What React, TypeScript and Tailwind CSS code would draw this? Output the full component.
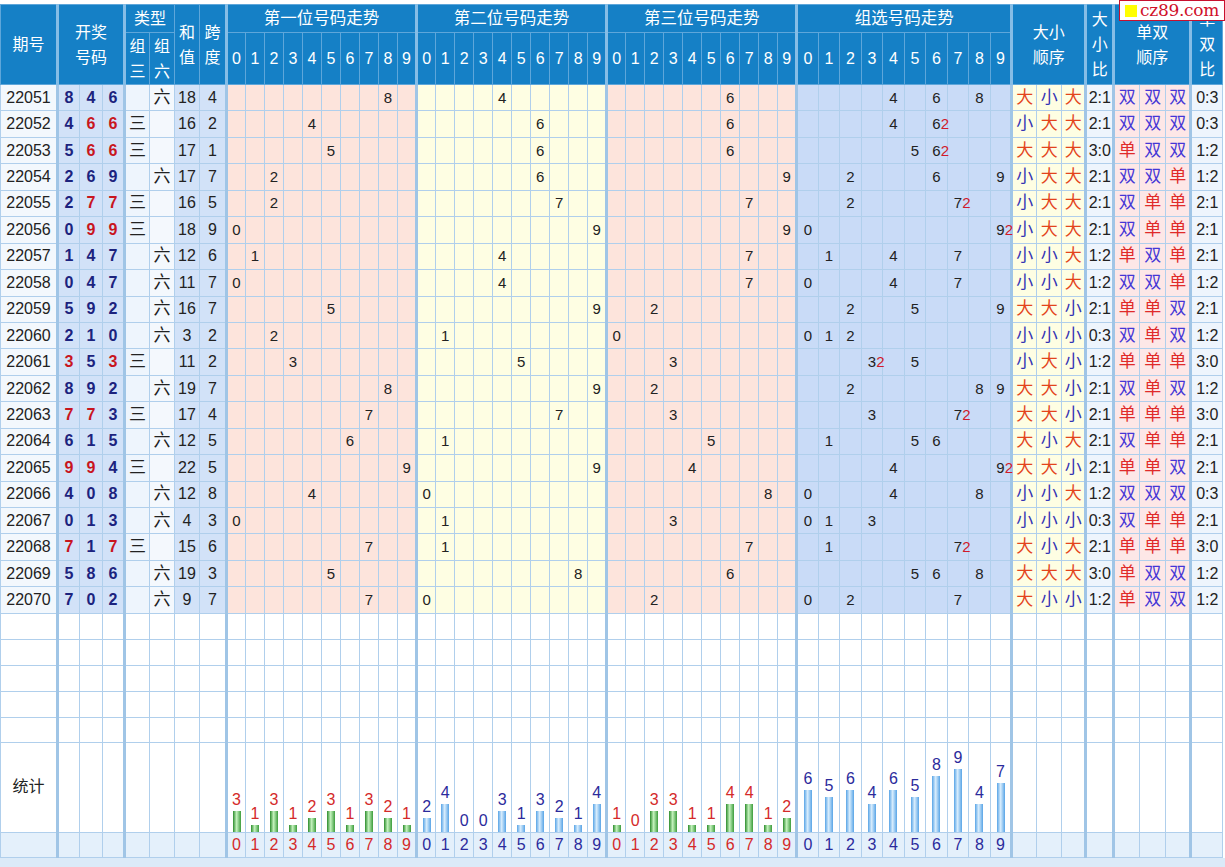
import React from 'react'

const DRAWS: [string, string][] = [
  ['22051', '846'], ['22052', '466'], ['22053', '566'], ['22054', '269'], ['22055', '277'],
  ['22056', '099'], ['22057', '147'], ['22058', '047'], ['22059', '592'], ['22060', '210'],
  ['22061', '353'], ['22062', '892'], ['22063', '773'], ['22064', '615'], ['22065', '994'],
  ['22066', '408'], ['22067', '013'], ['22068', '717'], ['22069', '586'], ['22070', '702'],
]

const rows = DRAWS.map(([period, s]) => {
  const d = s.split('').map(Number)
  const cnt = Array.from({ length: 10 }, (_, n) => d.filter((x) => x === n).length)
  const big = d.filter((x) => x >= 5).length
  const odd = d.filter((x) => x % 2 === 1).length
  return {
    period,
    d,
    cnt,
    zu3: new Set(d).size === 2,
    sum: d[0] + d[1] + d[2],
    span: Math.max(...d) - Math.min(...d),
    big,
    odd,
  }
})

const posStats = [0, 1, 2].map((p) => Array.from({ length: 10 }, (_, n) => rows.filter((r) => r.d[p] === n).length))
// total occurrences of each digit across all draws
const groupStats = Array.from({ length: 10 }, (_, n) => rows.reduce((acc, r) => acc + r.cnt[n], 0))

const DIGITS = [0, 1, 2, 3, 4, 5, 6, 7, 8, 9]
const POS_TITLES = ['第一位号码走势', '第二位号码走势', '第三位号码走势']
const POS_BG = ['bg-[#fde4dc]', 'bg-[#fefee3]', 'bg-[#fde4dc]']

// cell borders
const ln = 'border border-[#b0cfec] p-0 text-center'
const thick = 'border-r-[3px] border-r-[#a0c5e6]'
const hd = 'border border-[#5ea6da] p-0 text-center font-normal text-white'
const hdThick = 'border-r-[3px] border-r-[#86bde6]'

function Bar({ n, green }: { n: number; green: boolean }) {
  return (
    <div className="flex flex-col items-center justify-end">
      <span className={`text-[16px] leading-[18px] ${green ? 'text-[#d42a2a]' : 'text-[#2b2b9c]'}`}>{n}</span>
      <div
        className={`mt-[2px] w-[8px] ${
          green
            ? 'bg-[linear-gradient(to_right,#2c8c2c,#c4f2bd_45%,#3c9c3c)]'
            : 'bg-[linear-gradient(to_right,#58a4e6,#d8edfd_45%,#58a4e6)]'
        }`}
        style={{ height: n * 7 }}
      />
    </div>
  )
}

function SideCells() {
  return (
    <>
      <td className={ln} />
      <td className={ln} />
      <td className={`${ln} ${thick}`} />
      <td className={`${ln} ${thick}`} />
      <td className={ln} />
      <td className={ln} />
      <td className={`${ln} ${thick}`} />
      <td className={ln} />
    </>
  )
}

function LeftCells({ label }: { label?: string }) {
  return (
    <>
      <td className={`${ln} ${thick}`}>{label}</td>
      <td className={ln} />
      <td className={ln} />
      <td className={`${ln} ${thick}`} />
      <td className={ln} />
      <td className={ln} />
      <td className={ln} />
      <td className={`${ln} ${thick}`} />
    </>
  )
}

function BlankRow({ h }: { h: string }) {
  return (
    <tr className={h}>
      <LeftCells />
      {Array.from({ length: 40 }, (_, i) => (
        <td key={i} className={`${ln} ${i % 10 === 9 ? thick : ''}`} />
      ))}
      <SideCells />
    </tr>
  )
}

export default function App() {
  return (
    <div className="relative min-h-[867px] bg-white pt-[4px] font-['Liberation_Sans','Noto_Sans_CJK_SC',sans-serif] text-[16px] text-[#222]">
      {/* site badge */}
      <div className="absolute right-0 top-0 z-10 flex h-[21px] w-[106px] items-center gap-[3px] border border-[#c8102e] bg-white pl-[5px]">
        <span className="size-[12px] shrink-0 bg-[#ffff00]" />
        <span className="font-['DejaVu_Serif',serif] text-[17px] leading-none tracking-[-0.3px] text-[#d0102a]">cz89.com</span>
      </div>

      <table className="w-[1222px] table-fixed border-collapse">
        <colgroup>
          <col className="w-[57px]" />
          <col className="w-[22px]" />
          <col className="w-[23px]" />
          <col className="w-[22px]" />
          <col className="w-[25px]" />
          <col className="w-[25px]" />
          <col className="w-[25px]" />
          <col className="w-[27px]" />
          {Array.from({ length: 30 }, (_, i) => (
            <col key={'p' + i} className="w-[19px]" />
          ))}
          {DIGITS.map((i) => (
            <col key={'g' + i} className="w-[21.5px]" />
          ))}
          <col className="w-[25px]" />
          <col className="w-[25px]" />
          <col className="w-[24px]" />
          <col className="w-[28px]" />
          <col className="w-[26px]" />
          <col className="w-[26px]" />
          <col className="w-[25px]" />
          <col className="w-[32px]" />
        </colgroup>

        <thead className="bg-[#1580c6] leading-[25px]">
          <tr className="h-[28px]">
            <th rowSpan={2} className={`${hd} ${hdThick}`}>期号</th>
            <th rowSpan={2} colSpan={3} className={`${hd} ${hdThick}`}>
              开奖
              <br />
              号码
            </th>
            <th colSpan={2} className={hd}>类型</th>
            <th rowSpan={2} className={hd}>
              和<br />值
            </th>
            <th rowSpan={2} className={`${hd} ${hdThick}`}>
              跨<br />度
            </th>
            {POS_TITLES.map((t) => (
              <th key={t} colSpan={10} className={`${hd} ${hdThick} text-[16.5px]`}>
                {t}
              </th>
            ))}
            <th colSpan={10} className={`${hd} ${hdThick} text-[16.5px]`}>组选号码走势</th>
            <th rowSpan={2} colSpan={3} className={`${hd} ${hdThick}`}>
              大小
              <br />
              顺序
            </th>
            <th rowSpan={2} className={`${hd} ${hdThick}`}>
              大<br />小<br />比
            </th>
            <th rowSpan={2} colSpan={3} className={`${hd} ${hdThick}`}>
              单双
              <br />
              顺序
            </th>
            <th rowSpan={2} className={hd}>
              单<br />双<br />比
            </th>
          </tr>
          <tr className="h-[52px]">
            <th className={hd}>
              组<br />三
            </th>
            <th className={hd}>
              组<br />六
            </th>
            {Array.from({ length: 40 }, (_, i) => (
              <th key={i} className={`${hd} ${i % 10 === 9 ? hdThick : ''}`}>
                {i % 10}
              </th>
            ))}
          </tr>
        </thead>

        <tbody className="leading-[22px]">
          {rows.map((r) => (
            <tr key={r.period} className="h-[26.45px]">
              <td className={`${ln} ${thick} bg-[#f3f8fd]`}>{r.period}</td>
              {r.d.map((x, i) => (
                <td
                  key={i}
                  className={`${ln} ${i === 2 ? thick : ''} bg-[#d2e2f8] font-bold ${
                    r.cnt[x] > 1 ? 'text-[#c8161e]' : 'text-[#1c237e]'
                  }`}
                >
                  {x}
                </td>
              ))}
              <td className={`${ln} bg-[#eef5fd] text-[17px]`}>{r.zu3 ? '三' : ''}</td>
              <td className={`${ln} bg-[#f4f8fd] text-[17px]`}>{r.zu3 ? '' : '六'}</td>
              <td className={`${ln} bg-[#d2e2f8]`}>{r.sum}</td>
              <td className={`${ln} ${thick} bg-[#d2e2f8]`}>{r.span}</td>
              {[0, 1, 2].map((p) =>
                DIGITS.map((n) => (
                  <td key={p * 10 + n} className={`${ln} ${n === 9 ? thick : ''} ${POS_BG[p]} text-[15px]`}>
                    {r.d[p] === n ? n : ''}
                  </td>
                )),
              )}
              {DIGITS.map((n) => (
                <td key={'g' + n} className={`${ln} ${n === 9 ? thick : ''} bg-[#c9dbf7] text-[15px]`}>
                  {r.cnt[n] > 0 && (
                    <span className="relative">
                      {n}
                      {r.cnt[n] > 1 && <span className="absolute left-full text-[#d01a2a]">2</span>}
                    </span>
                  )}
                </td>
              ))}
              {r.d.map((x, i) => (
                <td
                  key={'b' + i}
                  className={`${ln} ${i === 2 ? thick : ''} bg-[#fefee3] text-[17px] ${
                    x >= 5 ? 'text-[#e3441c]' : 'text-[#3434b4]'
                  }`}
                >
                  {x >= 5 ? '大' : '小'}
                </td>
              ))}
              <td className={`${ln} ${thick} bg-[#eef5fd]`}>
                {r.big}:{3 - r.big}
              </td>
              {r.d.map((x, i) => (
                <td
                  key={'o' + i}
                  className={`${ln} ${i === 2 ? thick : ''} bg-[#fde7e7] text-[17px] ${
                    x % 2 === 1 ? 'text-[#e02a2a]' : 'text-[#4536d6]'
                  }`}
                >
                  {x % 2 === 1 ? '单' : '双'}
                </td>
              ))}
              <td className={`${ln} bg-[#eef5fd]`}>
                {r.odd}:{3 - r.odd}
              </td>
            </tr>
          ))}

          {[0, 1, 2, 3, 4].map((i) => (
            <BlankRow key={i} h={i === 4 ? 'h-[25px]' : 'h-[26px]'} />
          ))}

          {/* stats */}
          <tr className="h-[90px]">
            <LeftCells label="统计" />
            {posStats.map((s, p) =>
              s.map((n, d) => (
                <td key={p * 10 + d} className={`${ln} ${d === 9 ? thick : ''} align-bottom`}>
                  <Bar n={n} green={p !== 1} />
                </td>
              )),
            )}
            {groupStats.map((n, d) => (
              <td key={'gs' + d} className={`${ln} ${d === 9 ? thick : ''} align-bottom`}>
                <Bar n={n} green={false} />
              </td>
            ))}
            <SideCells />
          </tr>

          <tr className="h-[25px] bg-[#e4f0fb]">
            <LeftCells />
            {Array.from({ length: 40 }, (_, i) => (
              <td
                key={i}
                className={`${ln} ${i % 10 === 9 ? thick : ''} ${
                  i < 10 || (i >= 20 && i < 30) ? 'text-[#d42a2a]' : 'text-[#2b2b9c]'
                }`}
              >
                {i % 10}
              </td>
            ))}
            <SideCells />
          </tr>
        </tbody>
      </table>
      <div className="h-[12px] bg-[#dbeaf8]" />
    </div>
  )
}
